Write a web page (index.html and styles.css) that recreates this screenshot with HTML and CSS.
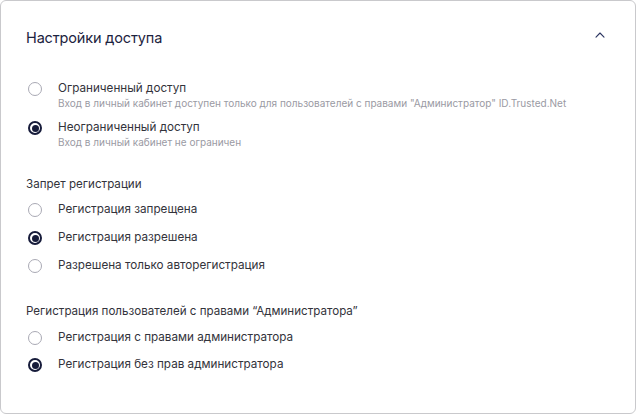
FILE: index.html
```html
<!DOCTYPE html>
<html lang="ru">
<head>
<meta charset="utf-8">
<title>Настройки доступа</title>
<link rel="stylesheet" href="styles.css">
</head>
<body>
<section class="card">
  <header class="card-header">
    <h2 class="card-title">Настройки доступа</h2>
    <svg class="chevron" width="10" height="6" viewBox="0 0 10 6" aria-hidden="true">
      <path d="M1 5.2 L5 1 L9 5.2" fill="none" stroke="#2a3460" stroke-width="1.1" stroke-linecap="round" stroke-linejoin="round"/>
    </svg>
  </header>

  <div class="group group-access">
    <div class="option option-desc">
      <span class="radio"></span>
      <div class="option-text">
        <div class="label">Ограниченный доступ</div>
        <div class="desc">Вход в личный кабинет доступен только для пользователей с правами "Администратор" ID.Trusted.Net</div>
      </div>
    </div>
    <div class="option option-desc">
      <span class="radio checked"></span>
      <div class="option-text">
        <div class="label">Неограниченный доступ</div>
        <div class="desc">Вход в личный кабинет не ограничен</div>
      </div>
    </div>
  </div>

  <div class="group group-reg">
    <div class="group-title">Запрет регистрации</div>
    <div class="rows rows-reg">
      <div class="option"><span class="radio"></span><span class="label">Регистрация запрещена</span></div>
      <div class="option"><span class="radio checked"></span><span class="label">Регистрация разрешена</span></div>
      <div class="option"><span class="radio"></span><span class="label">Разрешена только авторегистрация</span></div>
    </div>
  </div>

  <div class="group group-admin">
    <div class="group-title">Регистрация пользователей с правами “Администратора”</div>
    <div class="rows rows-admin">
      <div class="option"><span class="radio"></span><span class="label">Регистрация с правами администратора</span></div>
      <div class="option"><span class="radio checked"></span><span class="label">Регистрация без прав администратора</span></div>
    </div>
  </div>
</section>
</body>
</html>
```

FILE: styles.css
```css
* { box-sizing: border-box; }
html, body { margin: 0; padding: 0; background: #fff; }
body {
  font-family: Inter, "Noto Sans", "DejaVu Sans", sans-serif;
  color: #2b2b33;
}
.card {
  width: 636px;
  height: 414px;
  border: 1px solid #c9c9cc;
  border-radius: 6px;
  padding: 27px 0 0 25px;
  background: #fff;
}
.card-header {
  display: flex;
  align-items: center;
  justify-content: space-between;
  height: 20px;
  padding-right: 30px;
}
.card-title {
  margin: 0;
  font-size: 14.5px;
  letter-spacing: -0.15px;
  font-weight: 400;
  line-height: 20px;
  color: #1c2340;
}
.chevron { display: block; margin-top: -6px; }

.group-access {
  margin-top: 32px;
  display: flex;
  flex-direction: column;
  gap: 9px;
}
.option {
  display: flex;
  align-items: flex-start;
  gap: 16px;
  padding-left: 2px;
}
.radio {
  flex: none;
  width: 14px;
  height: 14px;
  margin-top: 2px;
  border: 1.2px solid #a9a9b4;
  border-radius: 50%;
  background: #fff;
  position: relative;
}
.radio.checked {
  border: 2px solid #161b3a;
}
.radio.checked::after {
  content: "";
  position: absolute;
  left: 1.5px;
  top: 1.5px;
  width: 7px;
  height: 7px;
  border-radius: 50%;
  background: #161b3a;
}
.label {
  font-size: 11.7px;
  line-height: 16px;
  color: #33333b;
}
.desc {
  font-size: 10px;
  line-height: 14px;
  color: #9a9aa3;
}
.group-title {
  font-size: 11.6px;
  line-height: 16px;
  color: #33333b;
}
.group-reg { margin-top: 27px; }
.group-admin { margin-top: 30px; }
.rows { display: flex; flex-direction: column; }
.rows-reg { margin-top: 9px; gap: 12px; }
.rows-admin { margin-top: 10px; gap: 11px; }
```
